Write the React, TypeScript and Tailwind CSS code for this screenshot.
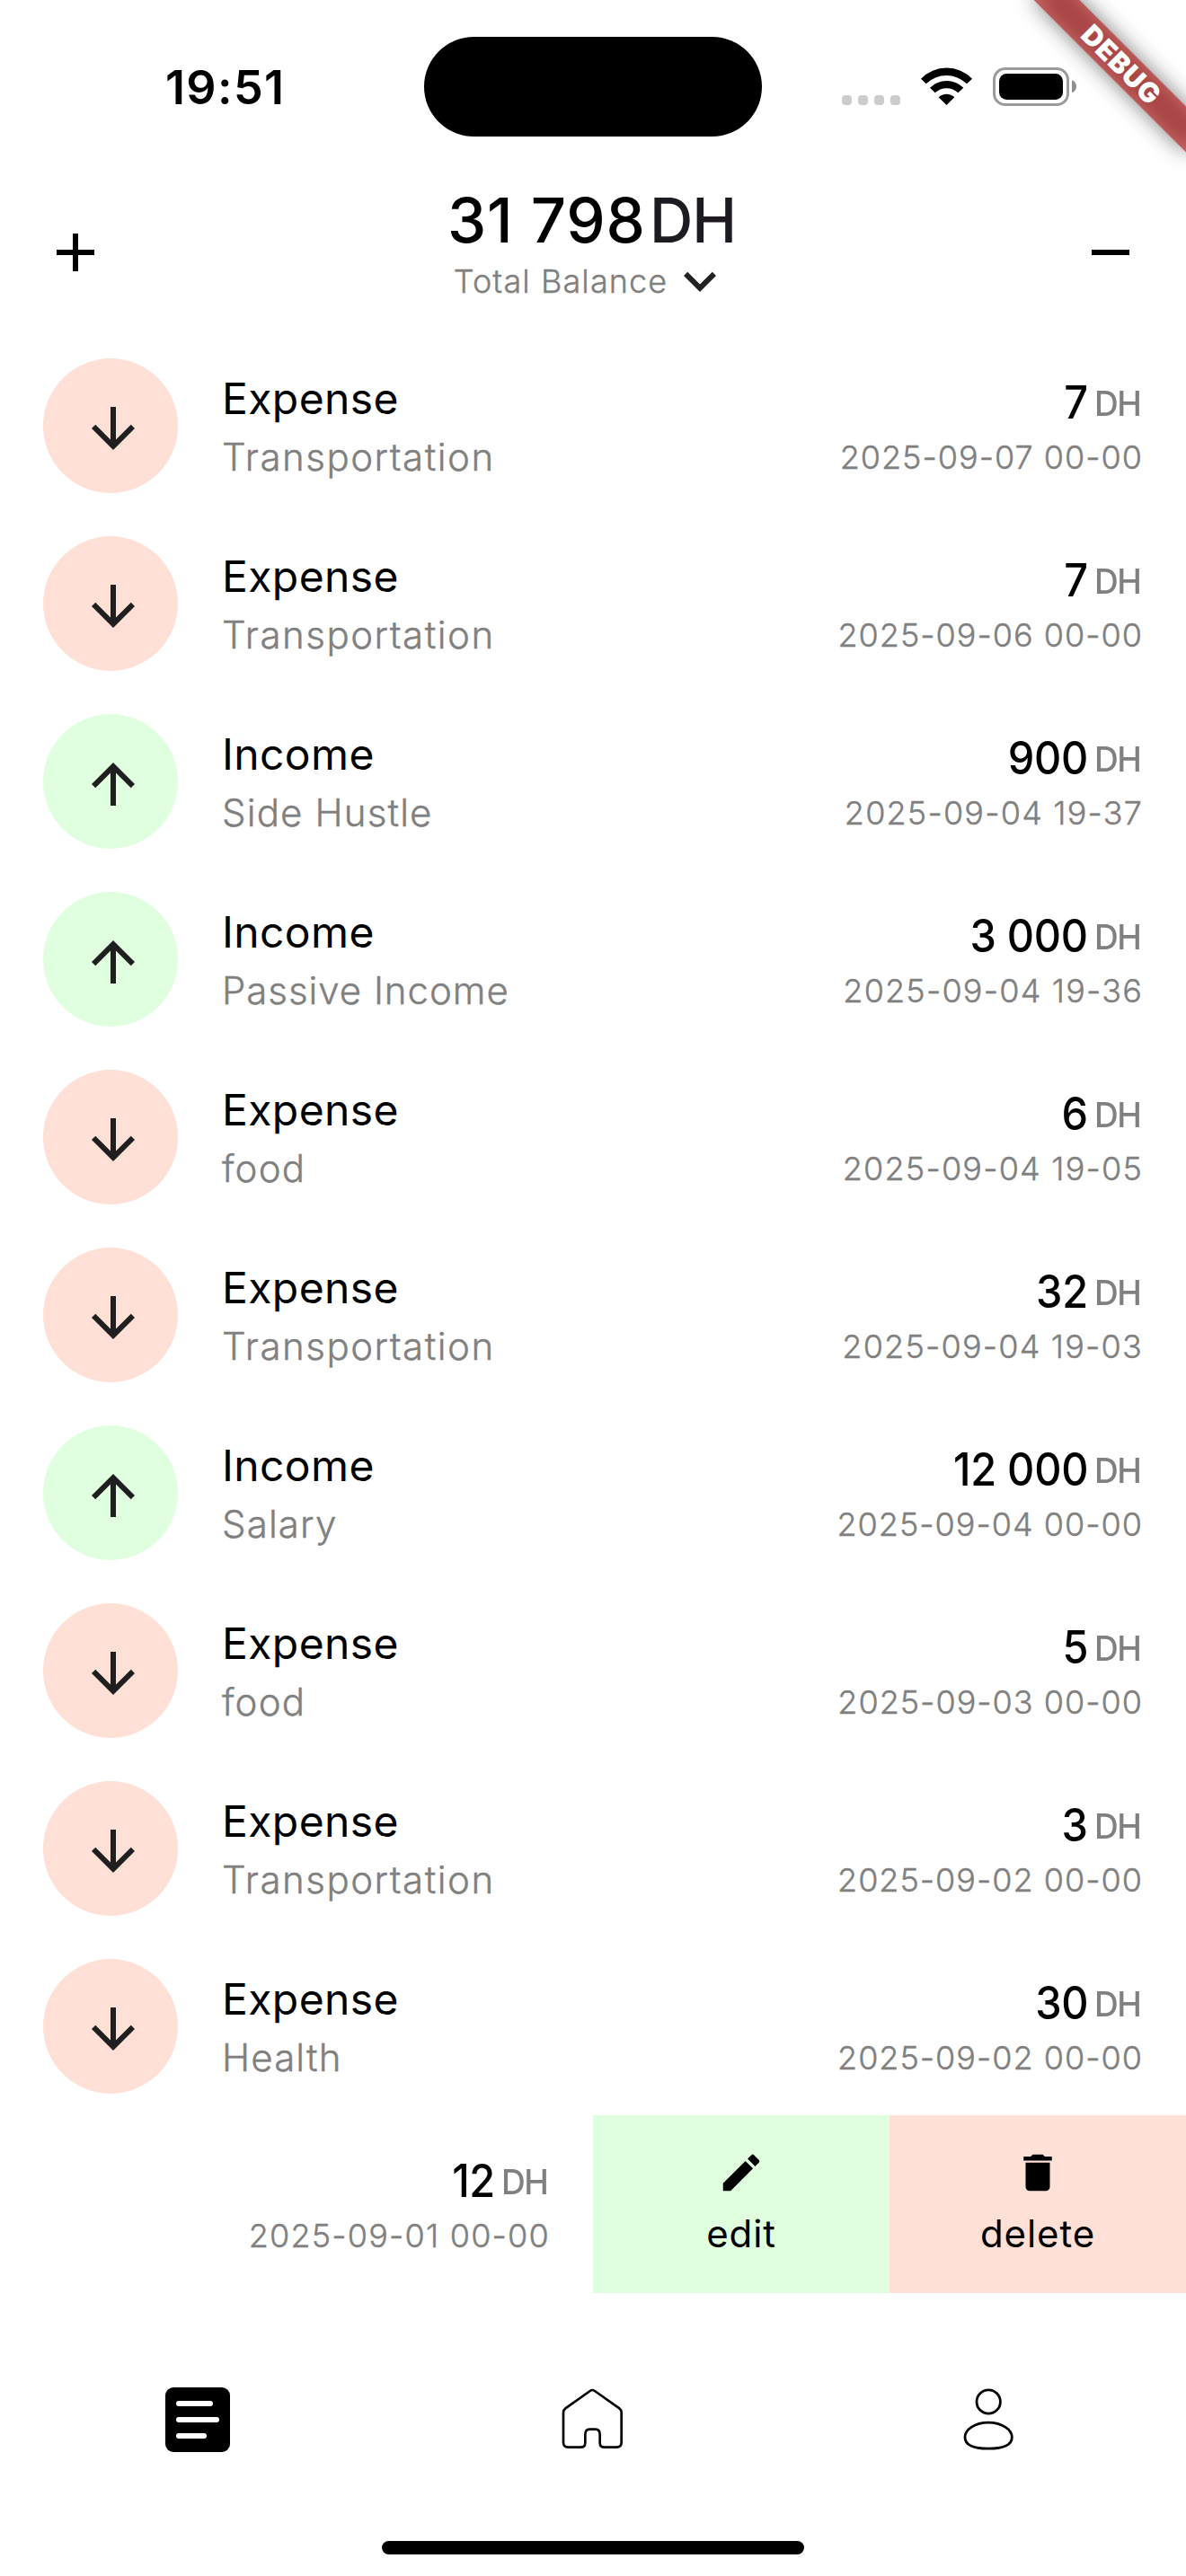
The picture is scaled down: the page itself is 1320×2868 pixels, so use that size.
import React from "react";
import { MdAdd, MdArrowDownward, MdArrowUpward, MdDelete, MdEdit, MdExpandMore, MdRemove } from "react-icons/md";

type Kind = "Expense" | "Income";
type Transaction = { kind: Kind; category: string; amount: string; date: string };

const transactions: Transaction[] = [
  { kind: "Expense", category: "Transportation", amount: "7", date: "2025-09-07 00-00" },
  { kind: "Expense", category: "Transportation", amount: "7", date: "2025-09-06 00-00" },
  { kind: "Income", category: "Side Hustle", amount: "900", date: "2025-09-04 19-37" },
  { kind: "Income", category: "Passive Income", amount: "3 000", date: "2025-09-04 19-36" },
  { kind: "Expense", category: "food", amount: "6", date: "2025-09-04 19-05" },
  { kind: "Expense", category: "Transportation", amount: "32", date: "2025-09-04 19-03" },
  { kind: "Income", category: "Salary", amount: "12 000", date: "2025-09-04 00-00" },
  { kind: "Expense", category: "food", amount: "5", date: "2025-09-03 00-00" },
  { kind: "Expense", category: "Transportation", amount: "3", date: "2025-09-02 00-00" },
  { kind: "Expense", category: "Health", amount: "30", date: "2025-09-02 00-00" },
];

const categoryTracking: Record<string, string> = {
  Transportation: "tracking-[1.5px]",
  "Passive Income": "tracking-[0.95px]",
};

function StatusBar() {
  return (
    <div className="flex h-[177px] shrink-0 items-start">
      <div className="w-[472px] pt-[72px] pl-[184px] text-[52px] leading-[52px] font-semibold tracking-[1.37px]">19:51</div>
      <div className="mt-[41px] h-[111px] w-[376px] rounded-full bg-black" />
      <div className="mt-[106px] ml-[89px] flex gap-[7px]">
        <span className="h-[11px] w-[11px] rounded-[4px] bg-[#cccccc]" />
        <span className="h-[11px] w-[11px] rounded-[4px] bg-[#cccccc]" />
        <span className="h-[11px] w-[11px] rounded-[4px] bg-[#cccccc]" />
        <span className="h-[11px] w-[11px] rounded-[4px] bg-[#cccccc]" />
      </div>
      <svg className="mt-[73px] ml-[21px] h-[46px] w-[61px]" viewBox="39 39 183 138">
        <path d="M45 83A119 119 0 0 1 216 83L198 100A97 97 0 0 0 62 100Z" />
        <path d="M75 113A80 80 0 0 1 187 113L169 130A56 56 0 0 0 92 130Z" />
        <path d="M104 145A38 38 0 0 1 157 145L130.500 171Z" />
      </svg>
      <svg className="mt-[73px] ml-[19px] h-[46px] w-[98px]" viewBox="279 39 294 138">
        <rect x="289.500" y="49.500" width="246" height="120" rx="37" fill="none" stroke="#9b9b9b" strokeWidth="9" />
        <rect x="306" y="66" width="213" height="87" rx="25" />
        <path d="M549 88C569 94 569 124 549 130Z" fill="#8f8f8f" />
      </svg>
    </div>
  );
}

function DebugBanner() {
  return (
    <div className="absolute top-0 right-0 h-[280px] w-[280px] overflow-hidden">
      <div className="absolute top-[54px] left-[88px] h-[36px] w-[240px] rotate-45 bg-black/50 blur-[12px]" />
      <div className="absolute top-[54px] left-[88px] flex h-[36px] w-[240px] rotate-45 items-center justify-center bg-[#b71c1c]/63 text-[30.6px] leading-[36px] font-black tracking-[0.8px] text-white">
        DEBUG
      </div>
    </div>
  );
}

function Header() {
  return (
    <header className="flex h-[198px] shrink-0 items-start justify-between px-[48px]">
      <MdAdd className="mt-[68px] h-[72px] w-[72px]" />
      <div className="flex flex-col items-center pt-[26px]">
        <div className="flex text-[69px] leading-[84px]">
          <span className="font-medium tracking-[0.8px]">31 798</span>
          <span className="ml-[4px] origin-left scale-x-[0.97] font-medium tracking-[-1px] text-[#1d1b20]">DH</span>
        </div>
        <div className="mt-[4px] flex items-center">
          <span className="text-[36px] leading-[44px] font-light tracking-[1.1px] text-[#808080] [-webkit-text-stroke:0.4px_#808080]">
            Total Balance
          </span>
          <MdExpandMore className="-my-[14px] h-[72px] w-[72px] text-[#212121]" />
        </div>
      </div>
      <MdRemove className="mt-[68px] h-[72px] w-[72px]" />
    </header>
  );
}

function Amount({ amount, date }: { amount: string; date: string }) {
  const narrowDate = date.includes("1");
  return (
    <div className="flex flex-col items-end pt-[42px]">
      <div className="flex items-center">
        <span className="origin-right scale-x-[0.92] text-[51px] leading-[60px] font-medium tracking-[-0.3px]">{amount}</span>
        <span className="mr-[1px] ml-[7px] origin-left scale-x-[0.975] pt-[2px] text-[38px] leading-[60px] font-medium tracking-[-1.4px] text-[#808080]">
          DH
        </span>
      </div>
      <span
        className={
          narrowDate
            ? "mt-[8px] text-[36px] leading-[44px] font-light tracking-[1.2px] text-[#808080] [-webkit-text-stroke:0.4px_#808080]"
            : "mt-[8px] text-[36px] leading-[44px] font-light tracking-[1px] text-[#808080] [-webkit-text-stroke:0.4px_#808080]"
        }
      >
        {date}
      </span>
    </div>
  );
}

function Row({ item }: { item: Transaction }) {
  const income = item.kind === "Income";
  const Arrow = income ? MdArrowUpward : MdArrowDownward;
  return (
    <li className="flex h-[198px] items-start px-[48px]">
      <div
        className={`mt-[24px] flex h-[150px] w-[150px] items-center justify-center rounded-full ${income ? "bg-[#dfffdf]" : "bg-[#ffe0d7]"}`}
      >
        <Arrow className="mt-[6px] ml-[6px] h-[72px] w-[72px] text-[#1f1f1f]" />
      </div>
      <div className="ml-[49px] flex flex-1 flex-col pt-[39px]">
        <span className="text-[48px] leading-[60px] tracking-[0.4px]">{item.kind}</span>
        <span
          className={`mt-[9px] text-[42px] leading-[52px] font-light text-[#808080] [-webkit-text-stroke:0.4px_#808080] ${categoryTracking[item.category] ?? "tracking-[1.15px]"}`}
        >
          {item.category}
        </span>
      </div>
      <Amount amount={item.amount} date={item.date} />
    </li>
  );
}

function SwipedRow() {
  return (
    <li className="flex h-[198px]">
      <div className="flex w-[660px] items-start justify-end pr-[48px]">
        <Amount amount="12" date="2025-09-01 00-00" />
      </div>
      <button className="flex w-[330px] flex-col items-center bg-[#dfffdf] pt-[37px]">
        <MdEdit className="h-[54px] w-[54px]" />
        <span className="mt-[15px] text-[42px] leading-[52px] tracking-[0.9px]">edit</span>
      </button>
      <button className="flex w-[330px] flex-col items-center bg-[#ffe0d7] pt-[37px]">
        <MdDelete className="h-[54px] w-[54px]" />
        <span className="mt-[15px] text-[42px] leading-[52px] tracking-[0.9px]">delete</span>
      </button>
    </li>
  );
}

function BottomNav() {
  return (
    <nav className="mt-[87px] grid grid-cols-3 justify-items-center">
      <svg className="h-[100px] w-[80px]" viewBox="0 0 80 100">
        <rect x="4" y="18" width="72" height="72" rx="9" />
        <g fill="#ffffff">
          <rect x="16" y="33" width="41" height="6" rx="3" />
          <rect x="16" y="51" width="48" height="6" rx="3" />
          <rect x="16" y="69" width="34" height="6" rx="3" />
        </g>
      </svg>
      <svg className="h-[100px] w-[80px]" viewBox="0 0 240 300" fill="none" stroke="black" strokeWidth="8">
        <path d="M110 66Q118 60 126 66L208 124Q215 129 215 138V238Q215 254 199 254H158Q143 254 143 240V212Q143 194 128 194H109Q94 194 94 212V240Q94 254 79 254H37Q21 254 21 238V138Q21 129 28 124Z" />
      </svg>
      <svg className="h-[100px] w-[80px]" viewBox="0 0 80 100" fill="none" stroke="black" strokeWidth="2.800">
        <circle cx="40.200" cy="34" r="13.200" />
        <path d="M40 57.200C25 57.200 14 65 14 73.500C14 83 24 86.200 40 86.200S66.300 83 66.300 73.500C66.300 65 55 57.200 40 57.200Z" />
      </svg>
    </nav>
  );
}

export default function App() {
  return (
    <div className="relative flex h-[2868px] w-[1320px] flex-col overflow-hidden bg-white font-[Inter,sans-serif] text-black">
      <StatusBar />
      <Header />
      <ul>
        {transactions.map((item) => (
          <Row key={item.date + item.category} item={item} />
        ))}
        <SwipedRow />
      </ul>
      <BottomNav />
      <div className="mt-[89px] h-[15px] w-[470px] self-center rounded-full bg-black" />
      <DebugBanner />
    </div>
  );
}
